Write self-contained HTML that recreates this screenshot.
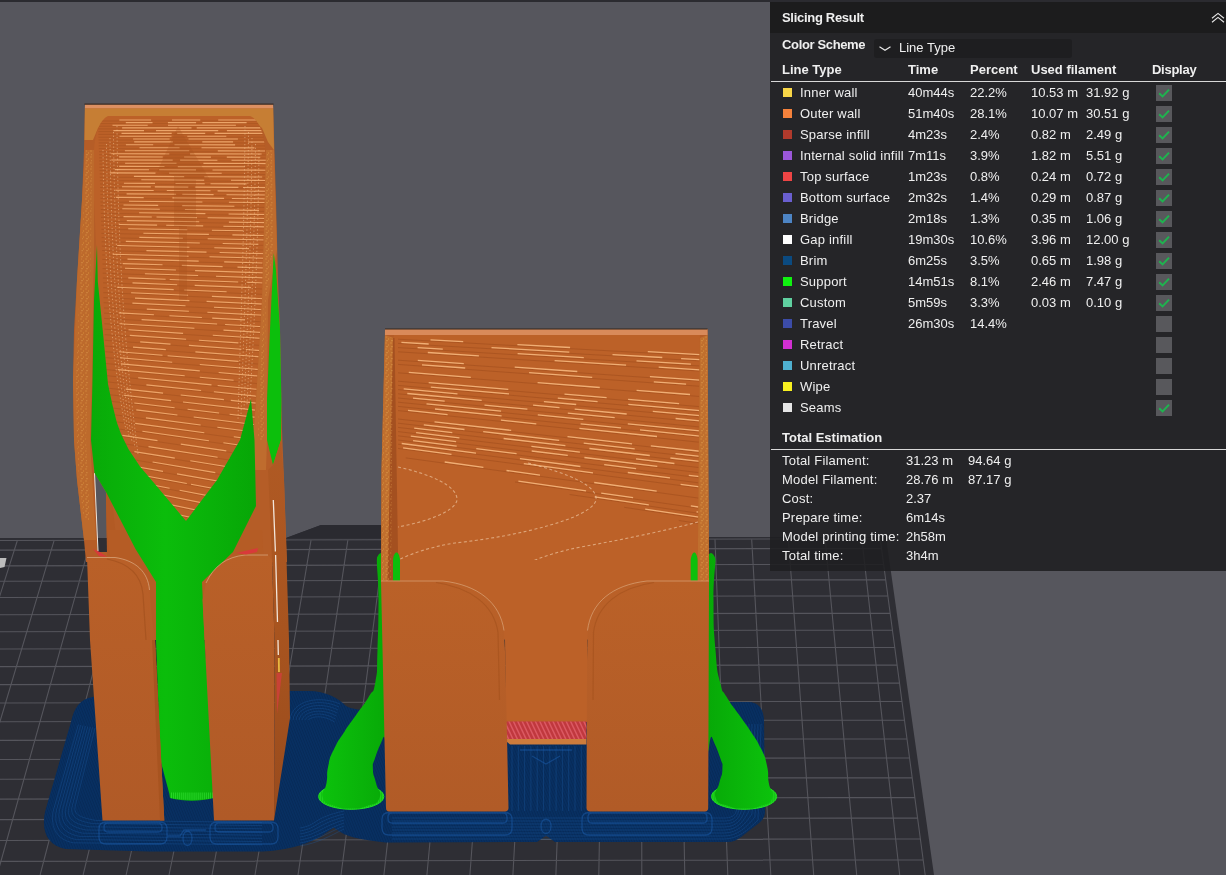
<!DOCTYPE html>
<html lang="en"><head><meta charset="utf-8"><title>Slicing Result</title>
<style>
html,body{margin:0;padding:0;}
body{width:1226px;height:875px;overflow:hidden;background:#56565d;font-family:"Liberation Sans",sans-serif;position:relative;}
.topbar{position:absolute;left:0;top:0;width:1226px;height:2px;background:#2b2b30;}
.scene{position:absolute;left:0;top:0;}
.panel{position:absolute;left:770px;top:2px;width:456px;height:569px;background:rgba(31,31,33,0.88);color:#efefef;font-size:13px;will-change:transform;}
.phead{position:absolute;left:0;top:0;width:456px;height:31px;background:#1c1c1d;}
.t{position:absolute;white-space:nowrap;line-height:16px;height:16px;}
.b{font-weight:bold;}
.l{letter-spacing:0.2px;}
.sw{position:absolute;left:13px;width:9px;height:9px;}
.cb{position:absolute;left:386px;width:16px;height:16px;background:#58585c;}
.hr{position:absolute;left:1px;width:455px;height:1px;background:#d8d8d8;}
.dd{position:absolute;left:104px;top:36.5px;width:198px;height:19.5px;background:#1e1e20;border-radius:3px;}
</style></head><body>
<div class="topbar"></div>
<svg class="scene" width="1226" height="875" viewBox="0 0 1226 875">
<defs>
<linearGradient id="gGreenL" x1="0" y1="0" x2="1" y2="0">
<stop offset="0" stop-color="#08aa08"/><stop offset="0.45" stop-color="#0bbd0b"/><stop offset="1" stop-color="#07a607"/>
</linearGradient>
<linearGradient id="gGreenA" x1="0" y1="0" x2="1" y2="0">
<stop offset="0" stop-color="#0cc20c"/><stop offset="1" stop-color="#07a807"/>
</linearGradient>
<linearGradient id="gGreenB" x1="0" y1="0" x2="1" y2="0">
<stop offset="0" stop-color="#07a807"/><stop offset="1" stop-color="#0cc20c"/>
</linearGradient>
<linearGradient id="gLeg" x1="0" y1="0" x2="0" y2="1">
<stop offset="0" stop-color="#b96028"/><stop offset="1" stop-color="#b05a27"/>
</linearGradient>
<linearGradient id="gLeg2" x1="0" y1="0" x2="0" y2="1">
<stop offset="0" stop-color="#ba6128"/><stop offset="1" stop-color="#b15b27"/>
</linearGradient>
<linearGradient id="gSide" gradientUnits="userSpaceOnUse" x1="0" y1="440" x2="0" y2="820"><stop offset="0" stop-color="#b05a24"/><stop offset="0.5" stop-color="#a8541f"/><stop offset="1" stop-color="#994b1d"/></linearGradient>
<pattern id="pSpk" width="5" height="6" patternUnits="userSpaceOnUse"><rect x="0.5" y="0.5" width="1" height="1" fill="#eaa84a"/><rect x="3" y="2.5" width="1" height="1" fill="#e09a3e"/><rect x="1.5" y="4.2" width="1" height="1" fill="#f0b860"/></pattern>
<pattern id="pHatch" width="2.4" height="2.4" patternUnits="userSpaceOnUse" patternTransform="rotate(68)"><rect x="0" y="0" width="2.4" height="1" fill="#05234c"/></pattern>
</defs>

<path d="M0 538 L286 538 L321 525 L670 525 L704 537 L886 537 L934 875 L0 875 Z" fill="#2e2e34"/>
<path d="M286 538 L321 525 L670 525 L704 538 Z" fill="#2a2a30"/>
<path d="M-19.5 541.0L-131.8 875M17.2 541.0L-88.8 875M54.0 540.9L-45.9 875M90.7 540.8L-2.9 875M127.4 540.8L40.1 875M164.1 540.7L83.1 875M200.9 540.6L126.1 875M237.6 540.6L169.0 875M274.3 540.5L212.0 875M311.0 540.4L255.0 875M347.8 540.3L298.0 875M384.5 540.3L341.0 875M421.2 540.2L383.9 875M457.9 540.1L426.9 875M494.7 540.1L469.9 875M531.4 540.0L512.9 875M568.1 539.9L555.9 875M604.8 539.9L598.8 875M641.5 539.8L641.8 875M678.3 539.7L684.8 875M715.0 539.7L727.8 875M751.7 539.6L770.8 875M788.4 539.5L813.7 875M825.2 539.5L856.7 875M861.9 539.4L899.7 875M880.3 539.5L925.2 875M0 540.5L880.2 538.8M0 550.1L881.5 548.4M0 565.9L883.6 564.2M0 581.3L885.7 579.6M0 597.5L887.9 595.8M0 614.8L890.2 613.1M0 631.7L892.4 630.0M0 649.0L894.8 647.3M0 666.6L897.1 664.9M0 684.6L899.5 682.9M0 703.0L902.0 701.3M0 721.7L904.5 720.0M0 740.4L907.0 738.7M0 759.5L909.5 757.8M0 779.3L912.2 777.6M0 799.1L914.8 797.4M0 819.6L917.6 817.9M0 840.5L920.4 838.8M0 861.4L923.2 859.7" stroke="#55555c" stroke-width="1.1" fill="none"/>
<path d="M100 697 L93 697 C80 699 74 708 71 722 L45 812 C41 832 48 846 66 849 L150 851.5 L262 851.5 C285 850.5 302 846 319 837.5 L333.6 827.7 L343.4 833.8 C352 837.5 362 840 386 842.5 L537 842 L546 835.5 L555 842 L727 842 C733 842 737 840 741 837 L759 823 C763 820 765 816 765 811 L764 722 C764 708 758 702 748 702 L730 702 L700 720 L400 720 L372 712 C362 709 352 710 346 706 C338 698 326 691 308 691 L286 691 L286 720 L100 720 Z" fill="#083062" />
<path d="M100 697 L93 697 C80 699 74 708 71 722 L45 812 C41 832 48 846 66 849 L150 851.5 L262 851.5 C285 850.5 302 846 319 837.5 L333.6 827.7 L343.4 833.8 C352 837.5 362 840 386 842.5 L537 842 L546 835.5 L555 842 L727 842 C733 842 737 840 741 837 L759 823 C763 820 765 816 765 811 L764 722 C764 708 758 702 748 702 L730 702 L700 720 L400 720 L372 712 C362 709 352 710 346 706 C338 698 326 691 308 691 L286 691 L286 720 L100 720 Z" fill="url(#pHatch)" opacity="0.45"/>
<g fill="none" stroke="#1d5da6" stroke-width="0.8" opacity="0.4">
<path d="M78.4 724.5 L53.2 811.0 C50.2 828.1 57.2 839.8 73.2 842.8 L262 844.8"/>
<path d="M80.7 725.0 L56.4 810.1 C53.4 826.2 60.4 836.6 76.4 839.6 L262 841.6"/>
<path d="M83.1 725.5 L59.6 809.1 C56.6 824.2 63.6 833.4 79.6 836.4 L262 838.4"/>
<path d="M85.4 726.0 L62.8 808.2 C59.8 822.3 66.8 830.2 82.8 833.2 L262 835.2"/>
<path d="M87.8 726.5 L66.0 807.2 C63.0 820.4 70.0 827.0 86.0 830.0 L262 832.0"/>
<path d="M90.2 727.0 L69.2 806.2 C66.2 818.5 73.2 823.8 89.2 826.8 L262 828.8"/>
<path d="M92.5 727.5 L72.4 805.3 C69.4 816.6 76.4 820.6 92.4 823.6 L262 825.6"/>
<path d="M94.9 728.0 L75.6 804.3 C72.6 814.6 79.6 817.4 95.6 820.4 L262 822.4"/>
<path d="M392 839.0 L724 839.0 C738 839.0 748.0 830.0 758.0 820.0 L761.0 724"/>
<path d="M392 836.0 L724 836.0 C738 836.0 746.5 827.0 755.0 817.0 L758.0 724"/>
<path d="M392 833.0 L724 833.0 C738 833.0 745.0 824.0 752.0 814.0 L755.0 724"/>
<path d="M392 830.0 L724 830.0 C738 830.0 743.5 821.0 749.0 811.0 L752.0 724"/>
<path d="M392 827.0 L724 827.0 C738 827.0 742.0 818.0 746.0 808.0 L749.0 724"/>
<path d="M392 824.0 L724 824.0 C738 824.0 740.5 815.0 743.0 805.0 L746.0 724"/>
<path d="M392 821.0 L724 821.0 C738 821.0 739.0 812.0 740.0 802.0 L743.0 724"/>
<path d="M392 818.0 L724 818.0 C738 818.0 737.5 809.0 737.0 799.0 L740.0 724"/>
<path d="M290.0 720 C292.0 700.0 320.0 695.0 340.0 704.0"/>
<path d="M300.0 846.0 C318.0 843.0 330.0 836.0 344.0 829.0"/>
<path d="M293.0 720 C295.0 703.0 320.0 698.0 339.1 707.0"/>
<path d="M300.0 843.0 C318.0 840.0 327.0 833.0 344.0 826.0"/>
<path d="M296.0 720 C298.0 706.0 320.0 701.0 338.2 710.0"/>
<path d="M300.0 840.0 C318.0 837.0 324.0 830.0 344.0 823.0"/>
<path d="M299.0 720 C301.0 709.0 320.0 704.0 337.3 713.0"/>
<path d="M300.0 837.0 C318.0 834.0 321.0 827.0 344.0 820.0"/>
<path d="M302.0 720 C304.0 712.0 320.0 707.0 336.4 716.0"/>
<path d="M300.0 834.0 C318.0 831.0 318.0 824.0 344.0 817.0"/>
<path d="M305.0 720 C307.0 715.0 320.0 710.0 335.5 719.0"/>
<path d="M300.0 831.0 C318.0 828.0 315.0 821.0 344.0 814.0"/>
<path d="M308.0 720 C310.0 718.0 320.0 713.0 334.6 722.0"/>
<path d="M300.0 828.0 C318.0 825.0 312.0 818.0 344.0 811.0"/>
<path d="M512.0 746 L512.0 811"/>
<path d="M518.3 746 L518.3 811"/>
<path d="M524.6 746 L524.6 811"/>
<path d="M530.9 746 L530.9 811"/>
<path d="M537.2 746 L537.2 811"/>
<path d="M543.5 746 L543.5 811"/>
<path d="M549.8 746 L549.8 811"/>
<path d="M556.1 746 L556.1 811"/>
<path d="M562.4 746 L562.4 811"/>
<path d="M568.7 746 L568.7 811"/>
<path d="M575.0 746 L575.0 811"/>
<path d="M581.3 746 L581.3 811"/>
</g>
<g fill="none" stroke="#1e62b4" stroke-width="1.3" opacity="0.45">
<path d="M106 822L160 822Q167 822 167 829L167 837Q167 844 160 844L106 844Q99 844 99 837L99 829Q99 822 106 822ZM108 823L158 823Q162 823 162 827L162 828Q162 832 158 832L108 832Q104 832 104 828L104 827Q104 823 108 823ZM217 822L271 822Q278 822 278 829L278 837Q278 844 271 844L217 844Q210 844 210 837L210 829Q210 822 217 822ZM219 823L269 823Q273 823 273 827L273 828Q273 832 269 832L219 832Q215 832 215 828L215 827Q215 823 219 823Z"/>
<path d="M167 836 L180 836 L184 830 L206 830 M183 838 C183 848 192 848 192 838 C192 829 183 829 183 838Z"/>
<path d="M389 812.5L505 812.5Q512 812.5 512 819.5L512 828Q512 835 505 835L389 835Q382 835 382 828L382 819.5Q382 812.5 389 812.5ZM392 813L503 813Q507 813 507 817L507 819Q507 823 503 823L392 823Q388 823 388 819L388 817Q388 813 392 813ZM589 812.5L705 812.5Q712 812.5 712 819.5L712 828Q712 835 705 835L589 835Q582 835 582 828L582 819.5Q582 812.5 589 812.5ZM592 813L703 813Q707 813 707 817L707 819Q707 823 703 823L592 823Q588 823 588 819L588 817Q588 813 592 813Z"/>
<path d="M532 756 L546 764 L560 756 M520 750 L572 750 M541 826 C541 836 551 836 551 826 C551 817 541 817 541 826Z"/>
</g>
<polygon points="85.0,104.0 84.0,150.0 82.0,200.0 77.0,280.0 74.0,330.0 73.0,380.0 74.0,440.0 77.0,480.0 84.0,540.0 86.0,562.0 287.0,562.0 284.0,480.0 282.0,430.0 280.0,330.0 278.0,280.0 276.0,200.0 273.0,104.0" fill="#b55d27" />
<polygon points="85.0,104.0 273.0,104.0 273.2,108.5 84.9,108.5" fill="#dc9062" />
<path d="M84.5 104.2 L273.5 104.2" stroke="#3a2a22" stroke-width="1.2" fill="none"/>
<polygon points="84.9,108.5 273.2,108.5 274.0,150.0 268.0,142.0 262.0,128.0 250.0,117.0 108.0,117.0 98.0,128.0 93.0,140.0 84.5,140.0" fill="#c67e34" />
<path d="M108 116 L250 116 C260 120 265 135 266 160 L262 300 L256 400 L253 440 L250 520 L120 520 L108 440 L100 330 L94 200 L94 150 C95 132 100 120 108 116 Z" fill="#bc6128" />
<clipPath id="cpLB"><path d="M108 116 L250 116 C260 120 265 135 266 160 L262 300 L256 400 L253 440 L250 520 L120 520 L108 440 L100 330 L94 200 L94 150 C95 132 100 120 108 116 Z"/></clipPath>
<g clip-path="url(#cpLB)" fill="none">
<path d="M98.0 121.0L270.0 121.0M98.1 123.6L270.0 123.6M98.2 126.2L270.0 126.2M98.2 128.9L270.0 128.9M98.3 131.6L269.9 131.7M98.4 134.4L269.9 134.4M98.5 137.2L269.9 137.2M98.6 140.0L269.9 140.1M98.7 142.9L269.9 143.0M98.8 145.8L269.9 145.9M98.9 148.7L269.9 148.9M99.0 151.7L269.8 151.9M99.1 154.7L269.8 155.0M99.1 157.8L269.8 158.2M99.2 160.9L269.8 161.3M99.3 164.1L269.8 164.6M99.4 167.3L269.8 167.8M99.5 170.6L269.7 171.2M99.7 173.9L269.7 174.6M99.8 177.2L269.7 178.0M99.9 180.6L269.7 181.5M100.0 184.0L269.7 185.0M100.1 187.5L269.7 188.6M100.2 191.1L269.6 192.3M100.3 194.6L269.6 196.0M100.4 198.3L269.6 199.8M100.5 202.0L269.6 203.6M100.6 205.7L269.6 207.5M100.8 209.5L269.5 211.5M100.9 213.4L269.5 215.5M101.0 217.3L269.5 219.6M101.1 221.2L269.5 223.7M101.3 225.2L269.5 228.0M101.4 229.3L269.4 232.2M101.5 233.4L269.4 236.6M101.6 237.6L269.4 241.0M101.8 241.8L269.4 245.5M101.9 246.1L269.3 250.1M102.1 250.5L269.3 254.7M102.2 254.9L269.3 259.4M102.3 259.4L269.3 264.2M102.5 264.0L269.3 269.1M102.6 268.6L269.2 274.0M102.8 273.2L269.2 279.0M102.9 278.0L269.2 284.1M103.1 282.8L269.2 289.3M103.2 287.7L269.1 294.6M103.4 292.6L269.1 299.9M103.5 297.6L269.1 305.4M103.7 302.7L269.1 310.9M103.9 307.9L269.0 316.5M104.0 313.1L269.0 322.2M104.2 318.4L269.0 328.0M104.4 323.7L268.9 333.9M104.5 329.2L268.9 339.9M104.7 334.7L268.9 346.0M104.9 340.3L268.9 352.2M105.1 346.0L268.8 358.5M105.2 351.7L268.8 364.9M105.4 357.6L268.8 371.3M105.6 363.5L268.7 378.0M105.8 369.5L268.7 384.7M106.0 375.6L268.7 391.5M106.2 381.8L268.6 398.4M106.4 388.0L268.6 405.5M106.6 394.4L268.6 412.6M106.8 400.8L268.5 419.9M107.0 407.3L268.5 427.3M107.2 413.9L268.5 434.8M107.4 420.6L268.4 442.4M107.6 427.4L268.4 450.2M107.9 434.3L268.4 458.1M108.1 441.3L268.3 466.1M108.3 448.4L268.3 474.3M108.5 455.5L268.2 482.6M108.8 462.8L268.2 491.0M109.0 470.2L268.2 499.6M109.2 477.7L268.1 508.3M109.5 485.2L268.1 517.2M109.7 492.9L268.0 526.2M110.0 500.7L268.0 535.3" stroke="#9c4a1b" stroke-width="0.8" opacity="0.5"/>
<path d="M119.3 120.0l31.8 0.0M172.0 120.0l28.3 0.0M218.2 120.0l41.5 0.0M125.8 122.6l26.7 0.0M167.9 122.6l28.2 0.0M202.4 122.6l44.2 0.0M112.5 125.2l35.2 0.0M168.0 125.2l67.9 0.0M122.1 127.9l69.4 0.0M196.7 127.9l64.0 0.0M113.4 130.6l30.6 0.0M156.0 130.6l62.2 0.0M226.9 130.6l51.6 0.0M121.5 133.4l50.2 0.0M177.2 133.4l28.0 0.0M214.6 133.4l56.2 0.0M119.5 136.2l52.0 0.0M187.3 136.2l39.0 0.0M133.1 139.0l36.5 0.0M188.5 139.0l49.4 0.0M134.2 141.9l38.6 0.0M202.3 141.9l30.8 0.0M248.0 142.0l60.1 0.0M125.9 144.8l27.3 0.0M174.5 144.8l60.6 0.1M139.5 147.8l40.0 0.0M201.5 147.8l52.9 0.1M124.9 150.7l64.3 0.1M217.8 150.9l47.4 0.1M111.2 153.8l58.1 0.1M190.1 153.9l71.5 0.1M119.1 156.9l43.6 0.1M184.1 157.0l26.8 0.1M226.8 157.1l33.5 0.1M111.3 160.0l61.4 0.1M180.1 160.1l37.3 0.1M231.5 160.2l66.2 0.2M125.1 163.2l51.4 0.1M203.4 163.4l63.9 0.2M119.2 166.4l45.3 0.1M177.8 166.6l67.1 0.2M114.8 169.6l34.2 0.1M159.1 169.8l36.9 0.1M212.5 170.0l53.5 0.2M109.8 172.9l45.7 0.2M169.1 173.1l52.6 0.2M133.9 176.4l50.3 0.2M204.3 176.7l57.9 0.3M141.3 179.8l62.9 0.3M231.0 180.3l63.7 0.3M123.9 183.2l31.1 0.2M175.5 183.5l29.2 0.2M210.5 183.7l36.1 0.2M122.0 186.7l28.8 0.2M154.8 186.9l33.5 0.2M194.9 187.1l43.5 0.3M243.0 187.5l67.7 0.4M115.4 190.2l38.3 0.3M166.8 190.5l43.7 0.3M217.6 190.9l66.7 0.5M126.6 193.9l49.5 0.4M182.3 194.3l31.3 0.3M226.5 194.7l39.0 0.3M116.1 197.4l27.6 0.2M172.4 197.9l51.7 0.5M231.9 198.5l52.4 0.5M129.0 201.3l73.4 0.7M228.9 202.2l59.9 0.6M123.5 205.0l34.7 0.4M182.2 205.6l52.2 0.6M122.3 208.8l37.5 0.4M184.9 209.5l74.1 0.9M139.1 212.8l66.3 0.8M228.6 214.0l37.7 0.5M123.5 216.6l28.3 0.4M156.5 217.0l40.4 0.6M207.6 217.7l60.4 0.8M126.8 220.6l72.4 1.1M228.9 222.1l73.3 1.1M119.0 224.5l38.1 0.6M166.2 225.3l37.0 0.6M223.4 226.2l70.9 1.1M128.2 228.8l59.0 1.0M211.9 230.2l31.3 0.5M143.4 233.2l65.5 1.2M232.4 234.9l50.6 1.0M139.3 237.4l43.6 0.9M207.7 238.8l75.0 1.5M125.8 241.4l74.0 1.6M222.7 243.5l35.7 0.8M117.2 245.5l72.2 1.7M214.3 247.8l34.7 0.8M146.4 250.6l60.1 1.5M219.6 252.5l54.7 1.4M112.7 254.2l75.9 2.0M209.5 256.8l53.8 1.4M127.5 259.1l71.2 2.0M224.2 261.9l38.2 1.1M122.7 263.6l39.8 1.2M181.8 265.4l40.8 1.2M237.5 267.1l34.4 1.1M125.0 268.3l50.9 1.7M195.1 270.6l73.3 2.4M144.9 273.7l53.2 1.8M216.0 276.2l54.3 1.9M128.3 277.9l37.3 1.4M169.7 279.5l68.5 2.5M246.7 282.3l52.0 1.9M132.5 282.9l44.7 1.8M194.7 285.4l56.3 2.2M116.9 287.2l56.8 2.4M184.2 290.0l42.4 1.8M131.1 292.8l57.0 2.5M211.9 296.4l74.9 3.3M135.0 298.1l54.4 2.5M206.6 301.4l63.9 3.0M132.4 303.1l53.1 2.6M214.0 307.2l64.5 3.2M146.8 309.1l42.1 2.2M207.4 312.3l77.3 4.1M118.8 312.9l35.1 1.9M169.4 315.7l32.5 1.8M212.2 318.1l32.5 1.8M141.6 319.6l75.5 4.4M225.1 324.5l66.1 3.9M119.4 323.7l75.0 4.6M223.5 330.1l40.4 2.5M128.5 329.8l54.6 3.6M212.8 335.2l72.7 4.7M129.8 335.4l56.3 3.9M198.9 340.2l39.5 2.7M140.2 341.9l30.3 2.2M188.9 345.4l52.5 3.8M245.9 349.5l46.8 3.4M133.0 347.1l32.8 2.5M195.4 351.9l71.2 5.4M118.9 351.8l43.6 3.5M167.6 355.7l70.9 5.7M120.0 357.8l52.2 4.4M199.8 364.5l73.3 6.2M120.8 363.9l79.0 7.0M218.7 372.5l67.3 6.0M117.8 369.6l66.9 6.2M199.8 377.2l33.8 3.1M138.2 377.7l73.3 7.2M217.7 385.5l76.2 7.4M146.4 384.9l54.7 5.6M213.9 391.8l60.1 6.2M125.8 389.1l37.3 4.0M180.7 395.0l43.2 4.6M230.8 400.4l39.0 4.2M123.7 395.3l47.4 5.3M183.0 402.0l71.9 8.1M134.3 403.0l40.3 4.8M187.6 409.3l31.5 3.7M229.6 414.3l31.3 3.7M136.3 409.9l41.1 5.1M193.7 417.0l82.1 10.2M145.9 417.9l54.7 7.1M217.4 427.2l77.0 10.0M135.2 423.4l69.1 9.4M233.8 436.8l49.9 6.8M142.4 431.3l66.5 9.4M223.4 442.8l50.4 7.2M122.4 435.4l35.1 5.2M180.8 444.1l45.5 6.8M234.5 452.1l35.9 5.3M148.5 446.6l69.1 10.7M229.0 459.0l44.9 7.0M134.4 451.6l40.4 6.5M190.3 460.7l46.3 7.5M152.6 462.0l62.7 10.6M225.6 474.4l86.5 14.7M131.2 465.8l31.8 5.6M177.0 473.9l58.8 10.4M126.0 472.3l60.8 11.2M191.0 484.3l47.0 8.7M244.4 494.2l54.8 10.1M120.0 478.7l49.6 9.6M179.6 490.2l65.8 12.7M145.7 491.5l70.3 14.1M238.6 510.2l83.1 16.7M131.1 496.4l89.6 18.8M228.7 516.9l74.5 15.6M121.5 502.2l81.3 17.8M230.0 526.0l69.2 15.1" stroke="#eca468" stroke-width="1.1"/>
<g stroke="#f0c090" stroke-width="1" stroke-dasharray="1.2 2.4" opacity="0.6">
<path d="M103.0 150.0 C104.0 250 110.0 350 126.0 430.0"/>
<path d="M259.0 150.0 C258.0 250 254.0 330 250.0 400.0"/>
<path d="M106.5 144.0 C107.5 250 113.6 350 129.0 436.0"/>
<path d="M255.5 144.0 C254.5 250 250.6 330 247.0 405.0"/>
<path d="M110.0 138.0 C111.0 250 117.2 350 132.0 442.0"/>
<path d="M252.0 138.0 C251.0 250 247.2 330 244.0 410.0"/>
<path d="M113.5 132.0 C114.5 250 120.8 350 135.0 448.0"/>
<path d="M248.5 132.0 C247.5 250 243.8 330 241.0 415.0"/>
<path d="M117.0 126.0 C118.0 250 124.4 350 138.0 454.0"/>
<path d="M245.0 126.0 C244.0 250 240.4 330 238.0 420.0"/>
</g>
</g>
<polygon points="178.0,126.0 210.0,180.0 196.0,180.0 196.0,226.0 187.0,226.0 187.0,300.0 179.0,300.0 179.0,226.0 174.0,226.0 174.0,176.0 157.0,172.0" fill="#a9521f" opacity="0.3"/>
<polygon points="85.0,150.0 94.0,150.0 94.0,250.0 92.0,380.0 90.0,440.0 96.0,540.0 84.0,540.0 77.0,480.0 74.0,440.0 73.0,380.0 77.0,280.0 82.0,200.0" fill="#bd6a2c" />
<polygon points="266.0,150.0 274.0,150.0 277.0,250.0 268.0,300.0 267.0,440.0 266.0,470.0 255.0,470.0 253.0,440.0 256.0,400.0 262.0,300.0" fill="#bf6c2e" />
<polygon points="86.0,150.0 92.0,150.0 91.0,250.0 88.0,380.0 86.0,440.0 90.0,520.0 84.0,520.0 79.0,480.0 77.0,440.0 76.0,380.0 80.0,280.0 84.0,200.0" fill="url(#pSpk)" opacity="0.7"/>
<polygon points="267.0,150.0 272.0,150.0 273.0,250.0 266.0,300.0 264.0,440.0 258.0,440.0 259.0,400.0 264.0,300.0" fill="url(#pSpk)" opacity="0.7"/>
<polygon points="94.5,473.0 106.0,492.0 107.0,551.0 98.0,551.0 97.0,538.0" fill="#56565d" />
<polygon points="97.0,538.0 107.0,538.0 107.0,552.0 98.0,552.0" fill="#2e2e34" />
<path d="M94.5 473 L98 551" stroke="#f0e4d8" stroke-width="1" fill="none"/>
<polygon points="0.0,558.0 6.5,558.0 4.5,567.0 0.0,568.0" fill="#bdbdbd" />
<polygon points="106.0,492.0 112.0,500.0 118.0,556.0 107.0,556.0" fill="#b25a24" />
<polygon points="107.0,530.0 262.0,530.0 268.0,640.0 120.0,640.0" fill="#b55c25" />
<path d="M97 245 L94 300 L92.5 380 L91 440 L94.5 473 L106 492 L135.5 549 L156 582 L156 640 L160.4 760 L169.4 794 L170 798 C184 801.5 200 801.5 213.4 798 L211.8 760 L209 700 L204.6 640 L202 582 L233 552 L256 506 L254.5 440 L251 399 L240 440 L217 480 L186 521 L151.5 480 L140 466.6 L128.7 449.4 L121 434 L116.7 422 L112 403 L108 384 L103 333 L97.8 281.4 Z" fill="url(#gGreenL)" />
<path d="M171.5 792.5L171.5 798.3M173.6 792.5L173.6 798.6M175.6 792.5L175.6 798.8M177.7 792.5L177.7 799.0M179.7 792.5L179.7 799.2M181.8 792.5L181.8 799.4M183.8 792.5L183.8 799.6M185.8 792.5L185.8 799.7M187.9 792.5L187.9 799.8M189.9 792.5L189.9 799.9M192.0 792.5L192.0 799.9M194.1 792.5L194.1 799.9M196.1 792.5L196.1 799.8M198.2 792.5L198.2 799.7M200.2 792.5L200.2 799.6M202.2 792.5L202.2 799.4M204.3 792.5L204.3 799.2M206.3 792.5L206.3 799.0M208.4 792.5L208.4 798.8M210.4 792.5L210.4 798.6M212.5 792.5L212.5 798.3" stroke="#35e035" stroke-width="0.9" fill="none" opacity="0.8"/>
<path d="M273.7 253 L270 330 L267 400 L267 440 L273 465 L281 440 L281.4 400 L280 330 L276 270 Z" fill="#0cbf0c" />
<path d="M87 557 L115 557 C136 560 148 572 149.5 590 L152 620 L155 640 L164.3 820.5 L102.5 820.5 L90 640 Z" fill="url(#gLeg)" />
<path d="M87 557.5 L115 557.5 C136 560.5 148 572 149.5 590" fill="none" stroke="#e9c9a8" stroke-width="1" opacity="0.5"/>
<path d="M107 559 C128 563 141 574 143 594 L146 640" fill="none" stroke="#a5531f" stroke-width="1.2" opacity="0.8"/>
<polygon points="93.0,549.0 99.0,556.0 107.0,557.0 100.0,552.0" fill="#d83a3a" />
<polygon points="155.0,640.0 164.3,820.5 160.0,820.5 152.0,640.0" fill="#a85420" />
<path d="M206 583 C214 566 226 557 245 555 L268 555 L272 560 L274.5 640 L274 820.5 L214 820.5 L204.6 640 L202.5 600 Z" fill="url(#gLeg)" />
<path d="M206 583 C214 566 226 557 245 555 L268 555" fill="none" stroke="#e9c9a8" stroke-width="1" opacity="0.5"/>
<polygon points="236.0,553.0 258.0,548.0 257.0,552.0 246.0,554.5" fill="#d83a3a" />
<polygon points="268.0,470.0 273.0,465.0 281.0,440.0 284.0,480.0 289.0,640.0 290.0,718.0 274.0,820.5 274.5,640.0 272.0,560.0" fill="url(#gSide)" />
<path d="M273.3 500 L275.4 551.5 M275.6 555 L277.5 622 M278 640 L278.3 655" stroke="#f3e6da" stroke-width="1.3" fill="none"/>
<path d="M278.8 658 L279 672" stroke="#e8b840" stroke-width="1.8" fill="none"/>
<polygon points="276.5,673.0 282.0,673.0 277.0,714.0" fill="#cc4038" opacity="0.9"/>
<clipPath id="cpS"><path d="M300 560 L376 560 Q381 546 386 560 L706 560 Q711 546 716 560 L800 560 L800 860 L300 860 Z"/></clipPath>
<ellipse cx="351.2" cy="796.5" rx="32.6" ry="12.8" fill="#0cb40c"/>
<path d="M320.2 792.5L320.2 800.5M322.2 790.7L322.2 802.3M324.2 789.3L324.2 803.7M326.2 788.3L326.2 804.7M328.2 787.4L328.2 805.6M330.2 786.7L330.2 806.3M332.2 786.1L332.2 806.9M334.2 785.6L334.2 807.4M336.2 785.1L336.2 807.9M338.2 784.8L338.2 808.2M340.2 784.5L340.2 808.5M342.2 784.2L342.2 808.8M344.2 784.0L344.2 809.0M346.2 783.9L346.2 809.1M348.2 783.8L348.2 809.2M350.2 783.7L350.2 809.3M352.2 783.7L352.2 809.3M354.2 783.8L354.2 809.2M356.2 783.9L356.2 809.1M358.2 784.0L358.2 809.0M360.2 784.2L360.2 808.8M362.2 784.5L362.2 808.5M364.2 784.8L364.2 808.2M366.2 785.1L366.2 807.9M368.2 785.6L368.2 807.4M370.2 786.1L370.2 806.9M372.2 786.7L372.2 806.3M374.2 787.4L374.2 805.6M376.2 788.3L376.2 804.7M378.2 789.3L378.2 803.7M380.2 790.7L380.2 802.3M382.2 792.5L382.2 800.5" stroke="#2be62b" stroke-width="0.9" fill="none"/>
<ellipse cx="351.2" cy="796.5" rx="32.6" ry="12.8" fill="none" stroke="#22e022" stroke-width="1"/>
<path d="M378.0 549.0 C375.1 564.3 378.6 569.7 378.5 600.0 C378.4 630.3 378.4 625.4 377.5 650.0 C376.6 674.6 378.1 667.9 375.4 682.0 C372.7 696.1 374.2 687.3 368.6 697.0 C363.0 706.7 363.8 704.0 356.6 714.3 C349.4 724.6 351.3 721.1 344.6 731.4 C337.9 741.7 339.2 738.3 334.3 748.6 C329.4 758.9 330.6 755.4 328.3 765.7 C326.0 776.0 328.1 773.3 326.5 783.0 C324.9 792.7 320.4 791.1 323.0 798.0 C325.6 804.9 326.6 802.9 335.0 806.0 C343.4 809.1 341.4 808.5 351.0 808.5 C360.6 808.5 358.4 809.1 367.0 806.0 C375.6 802.9 376.8 804.9 379.5 798.0 C382.2 791.1 378.0 791.7 376.0 783.0 C374.0 774.3 373.1 776.8 372.9 769.0 C372.7 761.2 372.4 766.3 375.4 757.0 C378.4 747.7 379.2 747.6 383.0 738.0 C386.8 728.4 386.5 781.7 388.0 725.0 C389.5 668.3 391.0 601.8 388.0 549.0 C385.0 496.2 380.9 533.7 378.0 549.0 Z" fill="url(#gGreenA)" clip-path="url(#cpS)"/>
<ellipse cx="744.1" cy="796.5" rx="32.6" ry="12.8" fill="#0cb40c"/>
<path d="M713.1 792.5L713.1 800.5M715.1 790.7L715.1 802.3M717.1 789.3L717.1 803.7M719.1 788.3L719.1 804.7M721.1 787.4L721.1 805.6M723.1 786.7L723.1 806.3M725.1 786.1L725.1 806.9M727.1 785.6L727.1 807.4M729.1 785.1L729.1 807.9M731.1 784.8L731.1 808.2M733.1 784.5L733.1 808.5M735.1 784.2L735.1 808.8M737.1 784.0L737.1 809.0M739.1 783.9L739.1 809.1M741.1 783.8L741.1 809.2M743.1 783.7L743.1 809.3M745.1 783.7L745.1 809.3M747.1 783.8L747.1 809.2M749.1 783.9L749.1 809.1M751.1 784.0L751.1 809.0M753.1 784.2L753.1 808.8M755.1 784.5L755.1 808.5M757.1 784.8L757.1 808.2M759.1 785.1L759.1 807.9M761.1 785.6L761.1 807.4M763.1 786.1L763.1 806.9M765.1 786.7L765.1 806.3M767.1 787.4L767.1 805.6M769.1 788.3L769.1 804.7M771.1 789.3L771.1 803.7M773.1 790.7L773.1 802.3M775.1 792.5L775.1 800.5" stroke="#2be62b" stroke-width="0.9" fill="none"/>
<ellipse cx="744.1" cy="796.5" rx="32.6" ry="12.8" fill="none" stroke="#22e022" stroke-width="1"/>
<path d="M715.0 549.0 C716.9 564.3 713.4 569.7 713.5 600.0 C713.6 630.3 713.5 625.4 715.5 650.0 C717.5 674.6 716.6 667.9 720.0 682.0 C723.4 696.1 721.1 687.3 726.7 697.0 C732.3 706.7 731.5 704.0 738.7 714.3 C745.9 724.6 744.0 721.1 750.7 731.4 C757.4 741.7 756.1 738.3 761.0 748.6 C765.9 758.9 764.7 755.4 767.0 765.7 C769.3 776.0 767.2 773.3 768.8 783.0 C770.4 792.7 774.8 791.1 772.3 798.0 C769.8 804.9 768.7 802.9 760.3 806.0 C751.9 809.1 753.9 808.5 744.3 808.5 C734.7 808.5 736.8 809.1 728.3 806.0 C719.8 802.9 718.5 804.9 715.8 798.0 C713.1 791.1 717.3 791.7 719.3 783.0 C721.3 774.3 722.2 776.8 722.4 769.0 C722.6 761.2 722.9 766.3 719.9 757.0 C716.9 747.7 716.1 747.6 712.3 738.0 C708.5 728.4 708.8 781.7 707.3 725.0 C705.8 668.3 705.0 601.8 707.3 549.0 C709.6 496.2 713.1 533.7 715.0 549.0 Z" fill="url(#gGreenB)" clip-path="url(#cpS)"/>
<polygon points="385.0,329.0 707.5,329.0 708.6,510.0 709.0,582.0 381.0,582.0 381.5,470.0" fill="#b55d27" />
<polygon points="394.0,335.0 700.0,335.0 698.0,582.0 650.0,582.0 587.0,640.0 587.0,722.0 506.0,722.0 505.0,640.0 440.0,582.0 398.0,582.0" fill="#bc6128" />
<clipPath id="cpRB"><polygon points="398,336 699.5,336 698,560 398,560"/></clipPath>
<g clip-path="url(#cpRB)" fill="none">
<path d="M398.0 339.2L700 355.8M398.0 343.4L700 360.9M398.0 347.6L700 366.0M398.0 351.8L700 371.1M398.0 360.2L700 381.2M398.0 364.4L700 386.3M398.0 372.8L700 396.5M398.0 381.2L700 406.7M398.0 385.4L700 411.8M398.0 389.6L700 416.9M398.0 393.8L700 422.0M398.0 398.0L700 427.0M398.0 402.2L700 432.1M398.0 406.4L700 437.2M398.0 410.6L700 442.3M398.0 419.0L700 452.5M398.0 423.2L700 457.6M398.0 427.4L700 462.7M398.0 431.6L700 467.7M398.0 435.8L700 472.8M398.0 440.0L700 477.9M398.0 444.2L700 483.0M398.0 448.4L700 488.1M405.8 457.9L700 498.3M515.0 482.0L700 508.4M569.6 494.5L700 513.5M624.2 507.3L700 518.6M678.8 520.5L700 523.7" stroke="#9c4a1b" stroke-width="0.9" opacity="0.55"/>
<path d="M430.5 339.8l32.7 1.8M517.4 344.6l52.7 2.9M647.8 351.7l69.3 3.8M401.4 342.4l27.3 1.6M491.5 347.6l77.8 4.5M612.5 354.6l49.8 2.9M681.1 358.6l26.0 1.5M417.6 347.6l25.2 1.5M517.6 353.7l66.2 4.0M636.5 360.9l54.4 3.3M427.8 352.5l51.1 3.3M554.6 360.6l71.5 4.6M658.7 367.2l66.6 4.3M417.8 360.4l46.0 3.2M514.7 367.1l62.6 4.4M649.9 376.6l58.9 4.1M422.0 364.9l43.2 3.1M529.1 372.7l63.1 4.6M653.8 381.8l32.3 2.3M408.8 372.4l62.0 4.9M537.6 382.6l62.2 4.9M636.6 390.3l53.4 4.2M428.7 382.6l79.6 6.7M564.5 394.1l42.1 3.6M628.1 399.4l51.0 4.3M430.8 387.1l78.2 6.8M557.8 398.2l39.8 3.5M628.3 404.3l77.0 6.7M403.7 388.9l53.8 4.9M543.9 401.6l32.3 2.9M652.8 411.4l53.0 4.8M407.3 393.5l74.4 6.9M533.1 405.2l26.4 2.5M574.7 409.1l52.0 4.9M675.6 418.5l41.6 3.9M413.0 398.2l31.7 3.0M484.5 405.1l42.9 4.1M567.8 413.1l46.9 4.5M426.5 403.8l74.6 7.4M537.8 414.9l45.5 4.5M627.8 423.8l79.9 7.9M435.0 409.0l66.6 6.8M580.6 423.8l40.4 4.1M640.0 429.9l61.4 6.3M408.0 410.4l39.6 4.2M500.9 420.2l35.4 3.7M579.4 428.4l77.6 8.1M434.5 421.9l76.7 8.5M567.5 436.6l64.6 7.2M650.8 445.8l65.3 7.2M423.8 424.9l40.7 4.6M483.2 431.7l76.0 8.6M583.7 443.1l51.0 5.8M675.5 453.6l41.4 4.7M414.2 428.1l38.1 4.5M503.6 438.5l61.8 7.2M589.4 448.5l60.4 7.0M670.4 458.0l52.5 6.1M416.1 432.6l43.3 5.2M531.4 446.4l48.5 5.8M636.0 458.9l38.4 4.6M410.8 436.2l45.3 5.5M531.7 451.0l36.1 4.4M584.4 457.5l72.9 8.9M413.1 440.7l43.6 5.5M476.3 448.6l40.3 5.1M604.2 464.7l31.9 4.0M688.8 475.3l59.6 7.5M401.7 443.5l74.3 9.6M519.9 458.7l60.5 7.8M627.8 472.5l42.2 5.4M403.1 447.9l48.4 6.4M523.8 463.7l69.2 9.1M680.6 484.3l51.9 6.8M444.7 462.0l38.7 5.3M506.5 470.5l33.5 4.6M594.2 482.5l62.5 8.6M518.4 481.2l67.7 9.7M601.2 493.1l31.9 4.6M690.8 505.9l27.1 3.9M594.7 496.9l54.1 7.9M696.5 511.8l67.0 9.8M645.2 509.2l57.1 8.5" stroke="#f0ae74" stroke-width="1.3"/>
<g stroke="#f3d2b0" stroke-width="1.1" stroke-dasharray="3 2.5" opacity="0.6">
<path d="M398 467 C430 474 458 486 457 500 C455 512 425 522 398 527"/>
<path d="M528 463 C570 474 598 486 596 500 C592 518 520 536 455 543 C435 546 415 552 398 560"/>
<path d="M698 522 C660 532 620 540 581 547 C560 551 545 556 530 562"/>
</g>
</g>
<polygon points="385.0,329.0 707.5,329.0 707.6,335.0 385.0,335.0" fill="#d98a5a" />
<path d="M385 329 L707.5 329" stroke="#33261f" stroke-width="1.2" fill="none"/>
<polygon points="385.0,335.0 394.0,338.0 398.0,582.0 381.0,582.0 381.5,470.0" fill="#c06f2e" />
<polygon points="393.0,338.0 394.5,338.0 398.5,582.0 387.5,582.0" fill="#a45020" />
<polygon points="707.6,335.0 700.0,338.0 697.6,582.0 709.0,582.0 708.6,510.0" fill="#c06f2e" />
<polygon points="385.5,336.0 393.0,338.0 391.0,582.0 382.0,582.0 382.0,470.0" fill="url(#pSpk)" opacity="0.8"/>
<polygon points="707.0,336.0 701.0,338.0 699.0,582.0 708.5,582.0 708.3,510.0" fill="url(#pSpk)" opacity="0.8"/>
<path d="M393 582 L393 560 C394 550 399 550 400 560 L400 582 Z" fill="#0cbf0c" />
<path d="M690.7 582 L690.7 560 C692 550 696.6 550 697.6 560 L697.6 582 Z" fill="#0cbf0c" />
<polygon points="506.0,721.5 586.5,721.5 586.5,739.0 506.0,739.0" fill="#c0383e" />
<g stroke="#e2626c" stroke-width="1.5" fill="none" opacity="0.8"><clipPath id="cpRed"><rect x="506" y="721.5" width="80.5" height="17.5"/></clipPath><g clip-path="url(#cpRed)">
<path d="M500.0 721 L509.0 740"/>
<path d="M504.4 721 L513.4 740"/>
<path d="M508.8 721 L517.8 740"/>
<path d="M513.2 721 L522.2 740"/>
<path d="M517.6 721 L526.6 740"/>
<path d="M522.0 721 L531.0 740"/>
<path d="M526.4 721 L535.4 740"/>
<path d="M530.8 721 L539.8 740"/>
<path d="M535.2 721 L544.2 740"/>
<path d="M539.6 721 L548.6 740"/>
<path d="M544.0 721 L553.0 740"/>
<path d="M548.4 721 L557.4 740"/>
<path d="M552.8 721 L561.8 740"/>
<path d="M557.2 721 L566.2 740"/>
<path d="M561.6 721 L570.6 740"/>
<path d="M566.0 721 L575.0 740"/>
<path d="M570.4 721 L579.4 740"/>
<path d="M574.8 721 L583.8 740"/>
<path d="M579.2 721 L588.2 740"/>
<path d="M583.6 721 L592.6 740"/>
<path d="M588.0 721 L597.0 740"/>
<path d="M592.4 721 L601.4 740"/>
</g></g>
<polygon points="506.0,739.0 586.5,739.0 586.5,744.5 510.0,744.5 506.0,741.0" fill="#cd7c3c" />
<path d="M381 580.5 L443 580.5 C478 584.5 500 602.5 504 630.5 L505.4 660 L508.5 808 C508.5 810 507 811.5 505 811.5 L389 811.5 C387 811.5 386 810 386 808 Z" fill="url(#gLeg2)" />
<path d="M709 580.5 L647 580.5 C612 584.5 591 602.5 587.5 630.5 L587 660 L586.5 808 C586.5 810 588 811.5 590 811.5 L705 811.5 C707 811.5 708.2 810 708.2 808 Z" fill="url(#gLeg2)" />
<path d="M381 581 L443 581 C478 585 500 602.5 504 630.5" fill="none" stroke="#ecc9a6" stroke-width="1" opacity="0.45"/>
<path d="M709 581 L647 581 C612 585 591 602.5 587.5 630.5" fill="none" stroke="#ecc9a6" stroke-width="1" opacity="0.45"/>
<path d="M436 582.5 C470 587.5 494 604.5 498 632.5 L499.5 700" fill="none" stroke="#a5521e" stroke-width="1.2" opacity="0.7"/>
<path d="M654 582.5 C620 587.5 597 604.5 593.5 632.5 L593 700" fill="none" stroke="#a5521e" stroke-width="1.2" opacity="0.7"/>
</svg><div class="panel">
<div class="phead"></div>
<div class="t b" style="left:12px;top:8px;letter-spacing:-0.3px">Slicing Result</div>
<svg style="position:absolute;left:441px;top:10px" width="14" height="12" viewBox="0 0 14 12"><path d="M1 6.2L7 1.4L13 6.2M1 10.2L7 5.4L13 10.2" fill="none" stroke="#e8e8e8" stroke-width="1.15"/></svg>
<div class="t b" style="left:12px;top:35px;letter-spacing:-0.35px">Color Scheme</div>
<div class="dd"></div>
<svg style="position:absolute;left:108px;top:43px" width="14" height="8" viewBox="0 0 14 8"><path d="M1.5 1.8L7 5.3L12.5 1.8" fill="none" stroke="#e8e8e8" stroke-width="1.2"/></svg>
<div class="t" style="left:129px;top:38px">Line Type</div>
<div class="t b" style="left:12px;top:60px">Line Type</div>
<div class="t b" style="left:138px;top:60px">Time</div>
<div class="t b" style="left:200px;top:60px">Percent</div>
<div class="t b" style="left:261px;top:60px">Used filament</div>
<div class="t b" style="left:382px;top:60px;letter-spacing:-0.27px">Display</div>
<div class="hr" style="top:79px"></div>
<div class="sw" style="top:86px;background:#f8d648"></div>
<div class="t l" style="left:30px;top:83px">Inner wall</div>
<div class="t" style="left:138px;top:83px">40m44s</div>
<div class="t" style="left:200px;top:83px">22.2%</div>
<div class="t" style="left:261px;top:83px">10.53 m</div>
<div class="t" style="left:316px;top:83px">31.92 g</div>
<div class="cb" style="top:83px"><svg width="16" height="16" viewBox="0 0 16 16"><path d="M3.2 8.2L6.6 11.4L13 4.6" fill="none" stroke="#1fb34f" stroke-width="2"/></svg></div>
<div class="sw" style="top:107px;background:#f5823c"></div>
<div class="t l" style="left:30px;top:104px">Outer wall</div>
<div class="t" style="left:138px;top:104px">51m40s</div>
<div class="t" style="left:200px;top:104px">28.1%</div>
<div class="t" style="left:261px;top:104px">10.07 m</div>
<div class="t" style="left:316px;top:104px">30.51 g</div>
<div class="cb" style="top:104px"><svg width="16" height="16" viewBox="0 0 16 16"><path d="M3.2 8.2L6.6 11.4L13 4.6" fill="none" stroke="#1fb34f" stroke-width="2"/></svg></div>
<div class="sw" style="top:128px;background:#b03a2c"></div>
<div class="t l" style="left:30px;top:125px">Sparse infill</div>
<div class="t" style="left:138px;top:125px">4m23s</div>
<div class="t" style="left:200px;top:125px">2.4%</div>
<div class="t" style="left:261px;top:125px">0.82 m</div>
<div class="t" style="left:316px;top:125px">2.49 g</div>
<div class="cb" style="top:125px"><svg width="16" height="16" viewBox="0 0 16 16"><path d="M3.2 8.2L6.6 11.4L13 4.6" fill="none" stroke="#1fb34f" stroke-width="2"/></svg></div>
<div class="sw" style="top:149px;background:#9b57d9"></div>
<div class="t l" style="left:30px;top:146px">Internal solid infill</div>
<div class="t" style="left:138px;top:146px">7m11s</div>
<div class="t" style="left:200px;top:146px">3.9%</div>
<div class="t" style="left:261px;top:146px">1.82 m</div>
<div class="t" style="left:316px;top:146px">5.51 g</div>
<div class="cb" style="top:146px"><svg width="16" height="16" viewBox="0 0 16 16"><path d="M3.2 8.2L6.6 11.4L13 4.6" fill="none" stroke="#1fb34f" stroke-width="2"/></svg></div>
<div class="sw" style="top:170px;background:#ee4545"></div>
<div class="t l" style="left:30px;top:167px">Top surface</div>
<div class="t" style="left:138px;top:167px">1m23s</div>
<div class="t" style="left:200px;top:167px">0.8%</div>
<div class="t" style="left:261px;top:167px">0.24 m</div>
<div class="t" style="left:316px;top:167px">0.72 g</div>
<div class="cb" style="top:167px"><svg width="16" height="16" viewBox="0 0 16 16"><path d="M3.2 8.2L6.6 11.4L13 4.6" fill="none" stroke="#1fb34f" stroke-width="2"/></svg></div>
<div class="sw" style="top:191px;background:#6a5fd0"></div>
<div class="t l" style="left:30px;top:188px">Bottom surface</div>
<div class="t" style="left:138px;top:188px">2m32s</div>
<div class="t" style="left:200px;top:188px">1.4%</div>
<div class="t" style="left:261px;top:188px">0.29 m</div>
<div class="t" style="left:316px;top:188px">0.87 g</div>
<div class="cb" style="top:188px"><svg width="16" height="16" viewBox="0 0 16 16"><path d="M3.2 8.2L6.6 11.4L13 4.6" fill="none" stroke="#1fb34f" stroke-width="2"/></svg></div>
<div class="sw" style="top:212px;background:#4d84c4"></div>
<div class="t l" style="left:30px;top:209px">Bridge</div>
<div class="t" style="left:138px;top:209px">2m18s</div>
<div class="t" style="left:200px;top:209px">1.3%</div>
<div class="t" style="left:261px;top:209px">0.35 m</div>
<div class="t" style="left:316px;top:209px">1.06 g</div>
<div class="cb" style="top:209px"><svg width="16" height="16" viewBox="0 0 16 16"><path d="M3.2 8.2L6.6 11.4L13 4.6" fill="none" stroke="#1fb34f" stroke-width="2"/></svg></div>
<div class="sw" style="top:233px;background:#ffffff"></div>
<div class="t l" style="left:30px;top:230px">Gap infill</div>
<div class="t" style="left:138px;top:230px">19m30s</div>
<div class="t" style="left:200px;top:230px">10.6%</div>
<div class="t" style="left:261px;top:230px">3.96 m</div>
<div class="t" style="left:316px;top:230px">12.00 g</div>
<div class="cb" style="top:230px"><svg width="16" height="16" viewBox="0 0 16 16"><path d="M3.2 8.2L6.6 11.4L13 4.6" fill="none" stroke="#1fb34f" stroke-width="2"/></svg></div>
<div class="sw" style="top:254px;background:#0b4a80"></div>
<div class="t l" style="left:30px;top:251px">Brim</div>
<div class="t" style="left:138px;top:251px">6m25s</div>
<div class="t" style="left:200px;top:251px">3.5%</div>
<div class="t" style="left:261px;top:251px">0.65 m</div>
<div class="t" style="left:316px;top:251px">1.98 g</div>
<div class="cb" style="top:251px"><svg width="16" height="16" viewBox="0 0 16 16"><path d="M3.2 8.2L6.6 11.4L13 4.6" fill="none" stroke="#1fb34f" stroke-width="2"/></svg></div>
<div class="sw" style="top:275px;background:#10f210"></div>
<div class="t l" style="left:30px;top:272px">Support</div>
<div class="t" style="left:138px;top:272px">14m51s</div>
<div class="t" style="left:200px;top:272px">8.1%</div>
<div class="t" style="left:261px;top:272px">2.46 m</div>
<div class="t" style="left:316px;top:272px">7.47 g</div>
<div class="cb" style="top:272px"><svg width="16" height="16" viewBox="0 0 16 16"><path d="M3.2 8.2L6.6 11.4L13 4.6" fill="none" stroke="#1fb34f" stroke-width="2"/></svg></div>
<div class="sw" style="top:296px;background:#60d0a0"></div>
<div class="t l" style="left:30px;top:293px">Custom</div>
<div class="t" style="left:138px;top:293px">5m59s</div>
<div class="t" style="left:200px;top:293px">3.3%</div>
<div class="t" style="left:261px;top:293px">0.03 m</div>
<div class="t" style="left:316px;top:293px">0.10 g</div>
<div class="cb" style="top:293px"><svg width="16" height="16" viewBox="0 0 16 16"><path d="M3.2 8.2L6.6 11.4L13 4.6" fill="none" stroke="#1fb34f" stroke-width="2"/></svg></div>
<div class="sw" style="top:317px;background:#3c4ca8"></div>
<div class="t l" style="left:30px;top:314px">Travel</div>
<div class="t" style="left:138px;top:314px">26m30s</div>
<div class="t" style="left:200px;top:314px">14.4%</div>
<div class="cb" style="top:314px"></div>
<div class="sw" style="top:338px;background:#d22fd2"></div>
<div class="t l" style="left:30px;top:335px">Retract</div>
<div class="cb" style="top:335px"></div>
<div class="sw" style="top:359px;background:#4fb0d0"></div>
<div class="t l" style="left:30px;top:356px">Unretract</div>
<div class="cb" style="top:356px"></div>
<div class="sw" style="top:380px;background:#f8f020"></div>
<div class="t l" style="left:30px;top:377px">Wipe</div>
<div class="cb" style="top:377px"></div>
<div class="sw" style="top:401px;background:#e6e6e6"></div>
<div class="t l" style="left:30px;top:398px">Seams</div>
<div class="cb" style="top:398px"><svg width="16" height="16" viewBox="0 0 16 16"><path d="M3.2 8.2L6.6 11.4L13 4.6" fill="none" stroke="#1fb34f" stroke-width="2"/></svg></div>
<div class="t b" style="left:12px;top:428px">Total Estimation</div>
<div class="hr" style="top:447px"></div>
<div class="t l" style="left:12px;top:451px">Total Filament:</div>
<div class="t" style="left:136px;top:451px">31.23 m</div>
<div class="t" style="left:198px;top:451px">94.64 g</div>
<div class="t l" style="left:12px;top:470px">Model Filament:</div>
<div class="t" style="left:136px;top:470px">28.76 m</div>
<div class="t" style="left:198px;top:470px">87.17 g</div>
<div class="t l" style="left:12px;top:489px">Cost:</div>
<div class="t" style="left:136px;top:489px">2.37</div>
<div class="t l" style="left:12px;top:508px">Prepare time:</div>
<div class="t" style="left:136px;top:508px">6m14s</div>
<div class="t l" style="left:12px;top:527px">Model printing time:</div>
<div class="t" style="left:136px;top:527px">2h58m</div>
<div class="t l" style="left:12px;top:546px">Total time:</div>
<div class="t" style="left:136px;top:546px">3h4m</div>
</div>
</body></html>
